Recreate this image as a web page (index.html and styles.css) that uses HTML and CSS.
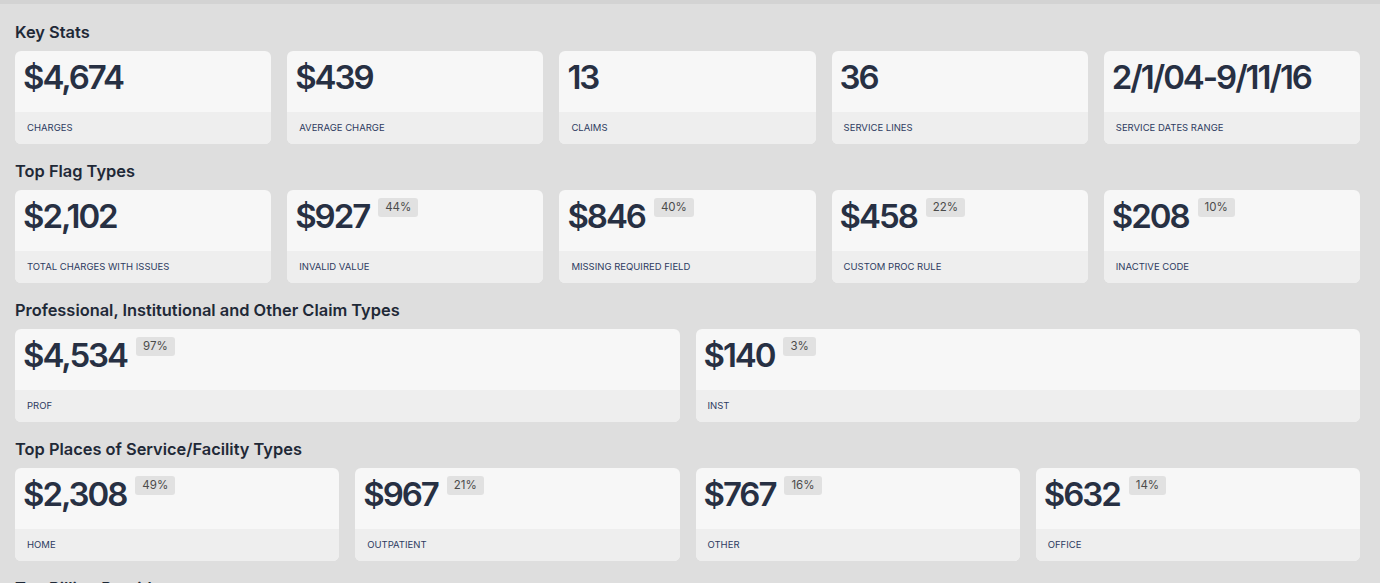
FILE: index.html
```html
<!DOCTYPE html>
<html lang="en">
  <head>
    <meta charset="UTF-8" />
    <meta name="viewport" content="width=device-width, initial-scale=1.0" />
    <title>Claims Summary</title>
    <link rel="stylesheet" href="styles.css">
  </head>
  <body>
    <div class="topbar"></div>

    <div id="Summary">
      <div class="section">
        <h2 class="title">Key Stats</h2>
        <div class="row cols5">
          <div class="card">
            <div class="top"><span class="value">$4,674</span></div>
            <div class="label">Charges</div>
          </div>
          <div class="card">
            <div class="top"><span class="value">$439</span></div>
            <div class="label">Average Charge</div>
          </div>
          <div class="card">
            <div class="top"><span class="value">13</span></div>
            <div class="label">Claims</div>
          </div>
          <div class="card">
            <div class="top"><span class="value">36</span></div>
            <div class="label">Service Lines</div>
          </div>
          <div class="card">
            <div class="top"><span class="value">2/1/04-9/11/16</span></div>
            <div class="label">Service Dates Range</div>
          </div>
        </div>
      </div>

      <div class="section">
        <h2 class="title">Top Flag Types</h2>
        <div class="row cols5">
          <div class="card">
            <div class="top"><span class="value">$2,102</span></div>
            <div class="label">Total Charges With Issues</div>
          </div>
          <div class="card">
            <div class="top"><span class="value">$927</span><span class="pct">44%</span></div>
            <div class="label">Invalid Value</div>
          </div>
          <div class="card">
            <div class="top"><span class="value">$846</span><span class="pct">40%</span></div>
            <div class="label">Missing Required Field</div>
          </div>
          <div class="card">
            <div class="top"><span class="value">$458</span><span class="pct">22%</span></div>
            <div class="label">Custom Proc Rule</div>
          </div>
          <div class="card">
            <div class="top"><span class="value">$208</span><span class="pct">10%</span></div>
            <div class="label">Inactive Code</div>
          </div>
        </div>
      </div>

      <div class="section">
        <h2 class="title">Professional, Institutional and Other Claim Types</h2>
        <div class="row cols2">
          <div class="card">
            <div class="top"><span class="value">$4,534</span><span class="pct">97%</span></div>
            <div class="label">Prof</div>
          </div>
          <div class="card">
            <div class="top"><span class="value">$140</span><span class="pct">3%</span></div>
            <div class="label">Inst</div>
          </div>
        </div>
      </div>

      <div class="section">
        <h2 class="title">Top Places of Service/Facility Types</h2>
        <div class="row cols4">
          <div class="card">
            <div class="top"><span class="value">$2,308</span><span class="pct">49%</span></div>
            <div class="label">Home</div>
          </div>
          <div class="card">
            <div class="top"><span class="value">$967</span><span class="pct">21%</span></div>
            <div class="label">Outpatient</div>
          </div>
          <div class="card">
            <div class="top"><span class="value">$767</span><span class="pct">16%</span></div>
            <div class="label">Other</div>
          </div>
          <div class="card">
            <div class="top"><span class="value">$632</span><span class="pct">14%</span></div>
            <div class="label">Office</div>
          </div>
        </div>
      </div>

      <div class="section">
        <h2 class="title">Top Billing Providers</h2>
      </div>
    </div>
  </body>
</html>
```

FILE: styles.css
```css
html,
body {
  margin: 0;
  background-color: #dedede;
  font-family: Inter, "Liberation Sans", sans-serif;
}
.topbar {
  height: 4px;
  background-color: #d3d3d3;
}
#Summary {
  padding: 18px 20px 0 15px;
}
.section {
  margin-bottom: 17px;
}
.title {
  margin: 0 0 9px 0;
  font-size: 16.4px;
  line-height: 20px;
  font-weight: 600;
  color: #1f2937;
}
.row {
  display: grid;
  gap: 16px;
}
.cols5 {
  grid-template-columns: repeat(5, 1fr);
}
.cols4 {
  grid-template-columns: repeat(4, 1fr);
}
.cols2 {
  grid-template-columns: repeat(2, 1fr);
}
.card {
  border-radius: 6px;
  overflow: hidden;
  background-color: #f7f7f7;
}
.card .top {
  height: 61px;
  box-sizing: border-box;
  padding: 6px 9px 0 8px;
  display: flex;
  align-items: flex-start;
}
.value {
  font-size: 33px;
  line-height: 40px;
  font-weight: 600;
  letter-spacing: -0.062em;
  color: #273043;
}
.pct {
  margin: 2px 0 0 9px;
  padding: 0 7px;
  height: 19px;
  line-height: 19px;
  border-radius: 3px;
  background-color: #e1e1e1;
  font-size: 11.5px;
  color: #4b4b4b;
}
.label {
  height: 32px;
  line-height: 32px;
  padding: 0 12px;
  background-color: #eeeeee;
  font-size: 9.5px;
  text-transform: uppercase;
  color: #2d3b61;
}
```
